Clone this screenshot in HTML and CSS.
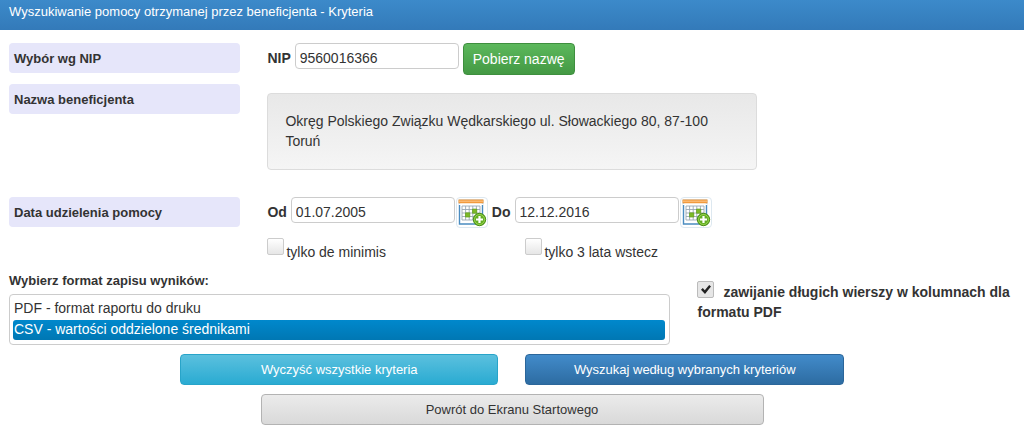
FILE: index.html
```html
<!DOCTYPE html>
<html lang="pl">
<head>
<meta charset="utf-8">
<meta name="viewport" content="width=device-width, initial-scale=1">
<title>Wyszukiwanie pomocy otrzymanej przez beneficjenta - Kryteria</title>
<link rel="stylesheet" href="styles.css">
</head>
<body>
<svg class="sprite" aria-hidden="true">
  <symbol id="calendar" viewBox="0 0 30 29">
    <path d="M2.500 2.500h23v23.500h-23z" fill="#fff" stroke="#4a8cc0" stroke-width="1.400"/>
    <path d="M1.500 1.500h25v4h-25z" fill="#f39a3c"/>
    <path d="M1.500 2.700h25v1h-25z" fill="#fbc68a"/>
    <path d="M1.500 5.500h25v1.500h-25z" fill="#fff"/>
    <path d="M5 8h18v14h-18zM5 11.500h18M5 15h18M5 18.500h18M8.600 8v14M12.200 8v14M15.800 8v14M19.400 8v14" fill="none" stroke="#9aa8b4" stroke-width=".9"/>
    <path d="M15.500 11h4.300v4.300h-4.300zM8.500 14.800h4.300v4.300h-4.300z" fill="#7cb928" stroke="#5c9a14" stroke-width=".6"/>
    <circle cx="22.500" cy="21.500" r="6.200" fill="#62ad22" stroke="#4a8f18"/>
    <circle cx="22.500" cy="21.500" r="5" fill="none" stroke="#a6dc5c" stroke-width=".8"/>
    <path d="M22.500 18v7M19 21.500h7" stroke="#fff" stroke-width="2.200"/>
  </symbol>
</svg>

<header class="titlebar">Wyszukiwanie pomocy otrzymanej przez beneficjenta - Kryteria</header>

<form class="criteria">
  <div class="row">
    <div class="row-label">Wybór wg NIP</div>
    <div class="fields">
      <label class="field-label" for="nip">NIP</label>
      <input class="text" id="nip" type="text" value="9560016366">
      <button class="btn btn-success" type="button">Pobierz nazwę</button>
    </div>
  </div>

  <div class="row row-name">
    <div class="row-label">Nazwa beneficjenta</div>
    <div class="well">Okręg Polskiego Związku Wędkarskiego ul. Słowackiego 80, 87-100 Toruń</div>
  </div>

  <div class="row">
    <div class="row-label">Data udzielenia pomocy</div>
    <div>
      <div class="fields">
        <label class="field-label" for="from">Od</label>
        <input class="text" id="from" type="text" value="01.07.2005">
        <button class="calendar" type="button" aria-label="Od"><svg><use href="#calendar"/></svg></button>
        <label class="field-label" for="to">Do</label>
        <input class="text" id="to" type="text" value="12.12.2016">
        <button class="calendar" type="button" aria-label="Do"><svg><use href="#calendar"/></svg></button>
      </div>
      <div class="checks">
        <label class="check"><input class="box" type="checkbox"><span>tylko de minimis</span></label>
        <label class="check"><input class="box" type="checkbox"><span>tylko 3 lata wstecz</span></label>
      </div>
    </div>
  </div>

  <div class="format">
    <div class="format-list">
      <label class="format-label" for="format">Wybierz format zapisu wyników:</label>
      <select class="list" id="format" size="2">
        <option>PDF - format raportu do druku</option>
        <option selected>CSV - wartości oddzielone średnikami</option>
      </select>
    </div>
    <label class="wrap"><input class="box" type="checkbox" checked>zawijanie długich wierszy w kolumnach dla formatu PDF</label>
  </div>

  <div class="actions">
    <button class="btn btn-info" type="reset">Wyczyść wszystkie kryteria</button>
    <button class="btn btn-primary" type="submit">Wyszukaj według wybranych kryteriów</button>
  </div>
  <button class="btn btn-default" type="button">Powrót do Ekranu Startowego</button>
</form>
</body>
</html>
```

FILE: styles.css
```css
* {
  box-sizing: border-box;
}

body {
  margin: 0;
  background: #fff;
  color: #333;
  font: 14px/20px "Liberation Sans", Arial, sans-serif;
}

input,
select,
button {
  margin: 0;
  font: inherit;
  color: inherit;
}

.sprite {
  display: none;
}

.titlebar {
  padding: 2px 9px 8px;
  background: linear-gradient(#3c8aca, #337ab9);
  color: #fff;
  font-size: 13px;
}

.criteria {
  display: flex;
  flex-direction: column;
  padding: 13px 9px 8px;
}

.row {
  display: grid;
  grid-template-columns: 23% 1fr;
  column-gap: 27px;
  align-items: start;
  margin-bottom: 9px;
}

.row-name {
  margin-bottom: 27px;
}

.row-label {
  padding: 6px 5px 4px;
  border-radius: 4px;
  background: #e6e6fa;
  font-size: 13px;
  font-weight: bold;
}

.fields {
  display: flex;
  align-items: flex-start;
  gap: 4px;
}

.field-label {
  padding-top: 5px;
  font-weight: bold;
}

.text {
  width: 164px;
  height: 26px;
  padding: 4px 4px 0;
  border: 1px solid #ccc;
  border-radius: 4px;
  background: #fff;
}

.well {
  max-width: 490px;
  margin-top: 9px;
  padding: 17px 20px 18px 17px;
  border: 1px solid #dcdcdc;
  border-radius: 4px;
  background: linear-gradient(#e8e8e8, #f5f5f5);
}

.calendar {
  width: 32px;
  height: 31px;
  margin-left: -3px;
  padding: 0;
  border: 1px solid #dde8f0;
  border-radius: 4px;
  background: #fff;
}

.calendar svg {
  display: block;
  width: 30px;
  height: 29px;
}

.checks {
  display: grid;
  grid-template-columns: 258px 1fr;
  margin-top: 10px;
}

.check {
  display: flex;
  gap: 2px;
}

.check span {
  padding-top: 4px;
}

.box {
  appearance: none;
  flex: none;
  display: inline-grid;
  place-items: center;
  width: 17px;
  height: 17px;
  border: 1px solid #ccc;
  border-radius: 2px;
  background: linear-gradient(#fff, #e6e6e6);
}

.box:checked {
  border-color: #bbb;
  background: #e6e6e6;
}

.box:checked::before {
  content: "";
  width: 10px;
  height: 9px;
  background: #222;
  clip-path: polygon(0 52%, 18% 34%, 38% 58%, 82% 0, 100% 16%, 40% 100%);
}

.format {
  display: grid;
  grid-template-columns: 25fr 12fr;
  column-gap: 27px;
}

.format-list {
  display: flex;
  flex-direction: column;
  gap: 3px;
}

.format-label {
  font-size: 13px;
  font-weight: bold;
}

.list {
  width: 100%;
  height: 51px;
  padding: 4px 4px 4px 3px;
  border: 1px solid #ccc;
  border-radius: 4px;
  background: #fff;
  overflow: hidden;
}

.list option {
  height: 20px;
  padding: 1px 1px 0;
  border-radius: 3px;
  line-height: 20px;
}

.list option + option {
  margin-top: 1px;
}

.list option:checked {
  background: linear-gradient(#0088cc, #0077b3);
  color: #fff;
  -webkit-text-fill-color: #fff;
}

.wrap {
  padding-top: 10px;
  font-weight: bold;
}

.wrap .box {
  margin-right: 9px;
  vertical-align: 3px;
}

.btn {
  height: 31px;
  padding: 0 9px;
  border: 1px solid;
  border-radius: 4px;
  color: #fff;
  font-size: 13px;
  text-align: center;
}

.btn-success {
  height: 32px;
  border-color: #3e8f3e;
  background: linear-gradient(#5cb85c, #449944);
  font-size: 14px;
}

.btn-info {
  border-color: #28a4c9;
  background: linear-gradient(#5bc0de, #2aabd2);
}

.btn-primary {
  border-color: #2b669a;
  background: linear-gradient(#428bca, #2d6ca2);
}

.btn-default {
  align-self: center;
  width: 50%;
  margin-top: 9px;
  border-color: #b3b3b3;
  background: linear-gradient(#ebebeb, #d9d9d9);
  color: #333;
}

.actions {
  display: grid;
  grid-template-columns: 1fr 1fr;
  column-gap: 27px;
  align-self: center;
  width: 66%;
  margin-top: 9px;
}
```
